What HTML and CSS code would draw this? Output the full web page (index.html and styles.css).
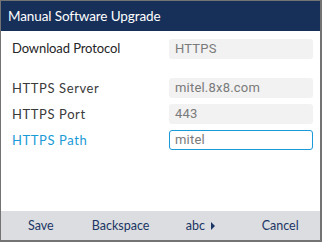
FILE: index.html
```html
<!DOCTYPE html>
<html>
<head>
<meta charset="utf-8">
<link rel="stylesheet" href="styles.css">
</head>
<body>
<div class="screen">
  <div class="header">Manual Software Upgrade</div>
  <div class="content">
    <div class="row first">
      <span class="label main">Download Protocol</span>
      <span class="field">HTTPS</span>
    </div>
    <div class="row">
      <span class="label">HTTPS Server</span>
      <span class="field">mitel.8x8.com</span>
    </div>
    <div class="row">
      <span class="label">HTTPS Port</span>
      <span class="field">443</span>
    </div>
    <div class="row active">
      <span class="label">HTTPS Path</span>
      <span class="field">mitel</span>
    </div>
  </div>
  <div class="footer">
    <span class="key">Save</span>
    <span class="key">Backspace</span>
    <span class="key">abc <svg class="arrow" width="4" height="8" viewBox="0 0 4 8"><path d="M0 0 L4 4 L0 8 Z" fill="#1b3565"/></svg></span>
    <span class="key">Cancel</span>
  </div>
</div>
</body>
</html>
```

FILE: styles.css
```css
html, body {
  margin: 0;
  padding: 0;
  background: #fff;
}
.screen {
  width: 322px;
  height: 242px;
  box-sizing: border-box;
  border-style: solid;
  border-color: #737373;
  border-width: 1px 2px 2px 1px;
  display: flex;
  flex-direction: column;
  background: #fff;
}
.header {
  height: 30px;
  background: #16305a;
  color: #fff;
  font-family: "Lato", sans-serif;
  font-size: 13.5px;
  line-height: 30px;
  padding-left: 7px;
  letter-spacing: -0.1px;
}
.content {
  flex: 1;
  padding: 8px 7px 0 11px;
  display: flex;
  flex-direction: column;
  gap: 6px;
}
.row {
  display: flex;
  align-items: center;
  height: 20px;
}
.row.first {
  margin-bottom: 13px;
}
.label {
  flex: 1;
  font-family: "Lato", sans-serif;
  font-size: 13px;
  color: #3a3a3a;
  letter-spacing: 0.6px;
}
.label.main {
  color: #262626;
  letter-spacing: -0.1px;
  padding-bottom: 3px;
}
.field {
  width: 144px;
  height: 20px;
  box-sizing: border-box;
  background: #f2f2f2;
  border-radius: 3px;
  padding-left: 6px;
  font-family: "Roboto", sans-serif;
  font-size: 13px;
  line-height: 20px;
  color: #7a7a7a;
  letter-spacing: 0.2px;
}
.row.active .label {
  color: #1a9ad6;
}
.row.active .field {
  background: #fff;
  border: 1px solid #1a9ad6;
  line-height: 18px;
  padding-left: 5px;
}
.footer {
  height: 29px;
  background: #dcdde0;
  display: grid;
  grid-template-columns: repeat(4, 1fr);
  align-items: center;
}
.key {
  text-align: center;
  font-family: "Lato", sans-serif;
  font-size: 12.5px;
  color: #1b3565;
}
.arrow {
  margin-left: 3px;
  vertical-align: 0;
}
```
